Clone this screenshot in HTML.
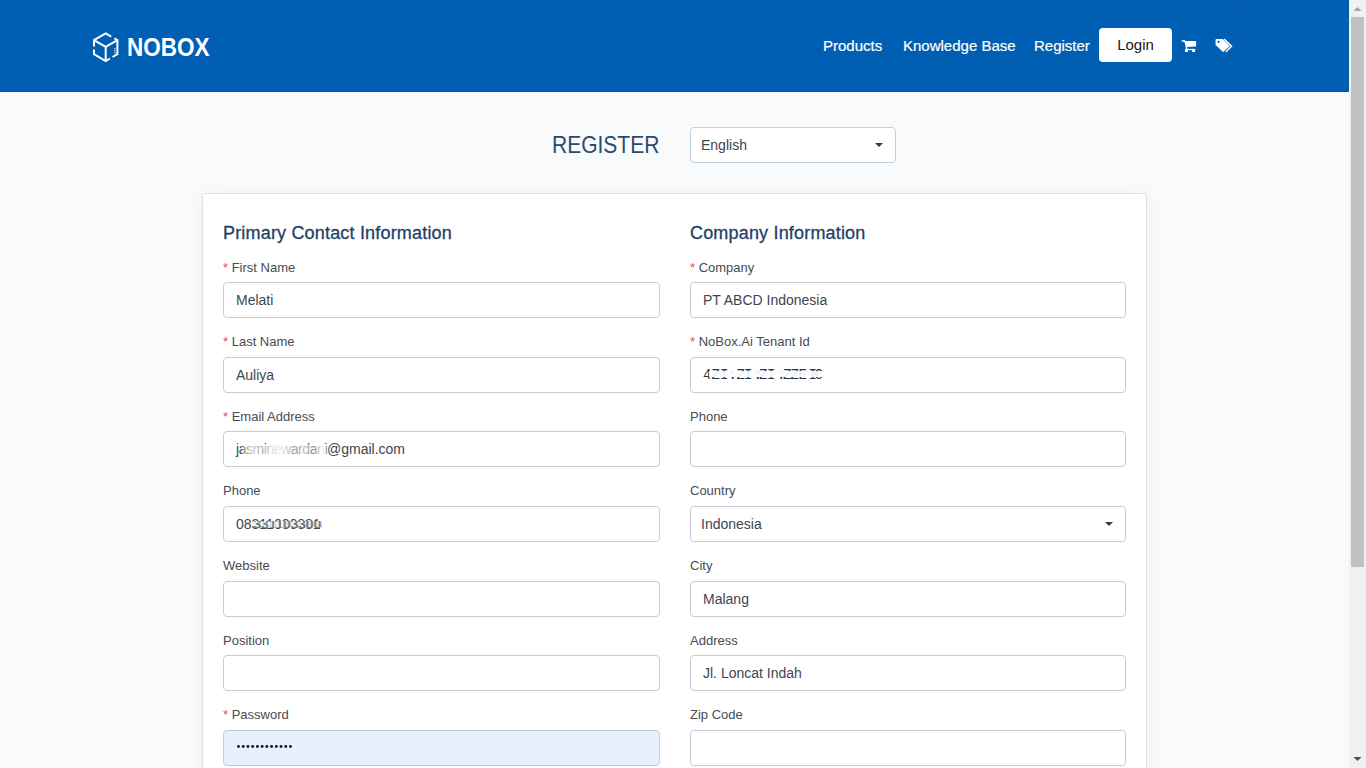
<!DOCTYPE html>
<html><head><meta charset="utf-8">
<style>
*{box-sizing:border-box;margin:0;padding:0}
html,body{width:1366px;height:768px;overflow:hidden;background:#f8fafc;font-family:"Liberation Sans",sans-serif}
.abs{position:absolute}
#nav{position:absolute;left:0;top:0;width:1349px;height:92px;background:#005eb3;border-bottom:1px solid #0454a6}
#navline{position:absolute;left:0;top:92px;width:1349px;height:1px;background:#fff}
.logo-text{position:absolute;left:127px;top:31px;font-size:25px;font-weight:bold;color:#fff;letter-spacing:0;line-height:32px;transform:scaleX(0.90);transform-origin:0 0}
.nl{position:absolute;top:37px;font-size:15px;color:#fff;line-height:17px;white-space:nowrap;-webkit-text-stroke:0.2px #fff}
#login{position:absolute;left:1099px;top:28px;width:73px;height:34px;background:#fff;border-radius:4px;font-size:15px;color:#1a1a1a;text-align:center;line-height:34px}
#sb{position:absolute;left:1349px;top:0;width:17px;height:768px;background:#f1f1f1}
#thumb{position:absolute;left:1351px;top:17px;width:13px;height:550px;background:#c1c1c1}
#title{position:absolute;left:552px;top:131px;font-size:24px;color:#2a4a6e;line-height:28px;transform:scaleX(0.875);transform-origin:0 0}
#lang{position:absolute;left:690px;top:127px;width:206px;height:36px;background:#fff;border:1px solid #c3cddb;border-radius:4px;font-size:14px;color:#3b4453;line-height:34px;padding-left:10px}
#card{position:absolute;left:202px;top:193px;width:945px;height:620px;background:#fff;border:1px solid #e0e2e5;border-radius:3px;box-shadow:0 2px 20px rgba(0,0,0,0.05)}
.h4{position:absolute;top:222px;font-size:18px;color:#1f3f66;line-height:22px;letter-spacing:0.18px;-webkit-text-stroke:0.3px #1f3f66}
.lbl{position:absolute;font-size:13px;color:#474b53;line-height:16px;white-space:nowrap}
.req{color:#f0445a}
.inp{position:absolute;height:36px;background:#fff;border:1px solid #c3cddb;border-radius:4px;font-size:14px;color:#40454e;line-height:34px;padding-left:12px;white-space:nowrap}
.inp.auto{background:#e8f0fe}
.caret{position:absolute;right:12px;top:15px;width:0;height:0;border-left:4px solid transparent;border-right:4px solid transparent;border-top:4px solid #3a3a3a}
#lang .caret{right:12px;top:15px}
.smudge{color:#6d7480;letter-spacing:-0.45px;opacity:.6}
.ov{position:absolute;background:rgba(246,248,248,0.82)}
.ph2{position:absolute;font-size:14px;line-height:34px;font-weight:bold;color:#0f1722;opacity:.55;letter-spacing:-0.2px;white-space:nowrap}
.tc{position:absolute;top:0;color:#2d3442;font-family:"Liberation Mono",monospace;font-size:14px}
.dot{position:absolute;top:14.75px;width:3.5px;height:3.5px;border-radius:50%;background:#151515}
.smudge2{color:#555e6c;opacity:.8;letter-spacing:-0.5px}
.smudge3{color:#6a7180;opacity:.7;letter-spacing:0px}
.dots{color:#111;font-size:10px;letter-spacing:-1.2px}
</style></head><body>
<div id="nav"></div>
<div id="navline"></div>
<svg class="abs" style="left:90px;top:29px" width="32" height="36" viewBox="0 0 32 36">
<g fill="none" stroke="#fff" stroke-width="2" stroke-linecap="butt" stroke-linejoin="miter">
<path d="M21.2 7.6 L15.7 4.4 L4 11.1 L4 17.6"/>
<path d="M4 20.4 L4 25.1 L15.7 32 L19.9 29.5"/>
<path d="M22.5 28 L27.4 25.1 L27.4 11.1 L24.4 9.3"/>
<path d="M4 11.1 L15.7 17.9 L27.4 11.1 M15.7 17.9 L15.7 32"/>
</g>
<g fill="#fff" opacity="0.85"><rect x="24" y="19.2" width="1.6" height="1"/><rect x="24" y="21.2" width="1.6" height="1"/><rect x="24" y="23.2" width="1.6" height="1"/></g>
</svg>
<div class="logo-text">NOBOX</div>
<div class="nl" style="left:823px">Products</div>
<div class="nl" style="left:903px">Knowledge Base</div>
<div class="nl" style="left:1034px">Register</div>
<div id="login">Login</div>
<svg class="abs" style="left:1178px;top:34px" width="22" height="22" viewBox="0 0 22 22">
<g fill="#fff">
<rect x="3.7" y="6.1" width="3.3" height="1.6"/><path d="M6.2 6.8 L7.5 6.8 L9.6 15 L8.2 15 Z"/>
<path d="M6.3 6.9 H18.1 V12.5 L8.6 13.1 Z"/>
<rect x="7.0" y="14.9" width="10.1" height="1.2"/>
<rect x="7.0" y="14.9" width="2.9" height="3.1"/>
<rect x="14.1" y="14.9" width="3.0" height="3.1"/>
</g></svg>
<svg class="abs" style="left:1214px;top:38px" width="22" height="18" viewBox="0 0 22 18">
<path fill="#fff" d="M2.3 1 H8.8 L15.4 7.6 Q15.8 8 15.4 8.4 L9.6 13.8 Q9.2 14.1 8.8 13.8 L1.6 6.9 V1.7 Q1.6 1 2.3 1 Z"/>
<circle cx="4.6" cy="3.9" r="1.05" fill="#005eb3"/>
<path fill="none" stroke="#fff" stroke-width="1.4" d="M10.1 1.1 L17.6 8.2 L11.8 14"/>
</svg>
<div class="abs" style="left:1242px;top:6px;width:1px;height:1px;background:#1d5580"></div><div class="abs" style="left:1242px;top:12px;width:1px;height:3px;background:#1d5580"></div>
<div id="sb"></div>
<div id="thumb"></div>
<svg class="abs" style="left:1349px;top:0" width="17" height="17"><path d="M4.5 11 L8.5 7 L12.5 11 Z" fill="#a3a3a3"/></svg>
<svg class="abs" style="left:1349px;top:751px" width="17" height="17"><path d="M4.5 6 L8.5 10 L12.5 6 Z" fill="#505050"/></svg>
<div id="title">REGISTER</div>
<div id="lang">English<div class="caret"></div></div>
<div id="card"></div>
<div class="h4" style="left:223px">Primary Contact Information</div>
<div class="h4" style="left:690px">Company Information</div>
<div class="lbl" style="left:223px;top:260px"><span class="req">*</span> First Name</div>
<div class="inp" style="left:223px;top:282px;width:437px">Melati</div>
<div class="lbl" style="left:223px;top:334px"><span class="req">*</span> Last Name</div>
<div class="inp" style="left:223px;top:357px;width:437px">Auliya</div>
<div class="lbl" style="left:223px;top:409px"><span class="req">*</span> Email Address</div>
<div class="inp" style="left:223px;top:431px;width:437px"><span style="letter-spacing:-0.45px">jasminewardani</span>@gmail.com<div class="ov" style="left:18px;top:12px;width:84px;height:11px;background:linear-gradient(90deg,rgba(255,255,255,.3) 0%,rgba(250,251,252,.75) 12%,rgba(255,255,255,.55) 25%,rgba(246,248,250,.9) 38%,rgba(255,255,255,.85) 50%,rgba(255,255,255,.45) 62%,rgba(250,250,250,.7) 75%,rgba(255,255,255,.35) 85%,rgba(255,255,255,.9) 95%)"></div></div>
<div class="lbl" style="left:223px;top:483px">Phone</div>
<div class="inp" style="left:223px;top:506px;width:437px">08311030881<div class="ov" style="left:30px;top:14px;width:68px;height:7px;overflow:hidden"><div class="ph2" style="left:-0.5px;top:-14px">33110330081</div></div></div>
<div class="lbl" style="left:223px;top:558px">Website</div>
<div class="inp" style="left:223px;top:581px;width:437px"></div>
<div class="lbl" style="left:223px;top:633px">Position</div>
<div class="inp" style="left:223px;top:655px;width:437px"></div>
<div class="lbl" style="left:223px;top:707px"><span class="req">*</span> Password</div>
<div class="inp auto" style="left:223px;top:730px;width:437px"><svg style="position:absolute;left:0;top:0" width="80" height="34"><circle cx="14.50" cy="15.50" r="1.45" fill="#151515"/><circle cx="19.23" cy="15.50" r="1.45" fill="#151515"/><circle cx="23.95" cy="15.50" r="1.45" fill="#151515"/><circle cx="28.68" cy="15.50" r="1.45" fill="#151515"/><circle cx="33.41" cy="15.50" r="1.45" fill="#151515"/><circle cx="38.13" cy="15.50" r="1.45" fill="#151515"/><circle cx="42.86" cy="15.50" r="1.45" fill="#151515"/><circle cx="47.59" cy="15.50" r="1.45" fill="#151515"/><circle cx="52.32" cy="15.50" r="1.45" fill="#151515"/><circle cx="57.04" cy="15.50" r="1.45" fill="#151515"/><circle cx="61.77" cy="15.50" r="1.45" fill="#151515"/><circle cx="66.50" cy="15.50" r="1.45" fill="#151515"/></svg></div>
<div class="lbl" style="left:690px;top:260px"><span class="req">*</span> Company</div>
<div class="inp" style="left:690px;top:282px;width:436px">PT ABCD Indonesia</div>
<div class="lbl" style="left:690px;top:334px"><span class="req">*</span> NoBox.Ai Tenant Id</div>
<div class="inp" style="left:690px;top:357px;width:436px"><span class="tc" style="left:12.0px">4</span><span class="tc" style="left:20.5px">Z</span><span class="tc" style="left:29.0px">I</span><span class="tc" style="left:37.5px">:</span><span class="tc" style="left:45.5px">Z</span><span class="tc" style="left:53.0px">I</span><span class="tc" style="left:62.5px">:</span><span class="tc" style="left:68.0px">Z</span><span class="tc" style="left:76.0px">I</span><span class="tc" style="left:86.0px">:</span><span class="tc" style="left:92.0px">Z</span><span class="tc" style="left:99.5px">Z</span><span class="tc" style="left:107.5px">E</span><span class="tc" style="left:117.5px">I</span><span class="tc" style="left:123.5px">C</span><div class="ov" style="left:18px;top:13px;width:116px;height:6px;background:rgba(252,252,253,0.9)"></div></div>
<div class="lbl" style="left:690px;top:409px">Phone</div>
<div class="inp" style="left:690px;top:431px;width:436px"></div>
<div class="lbl" style="left:690px;top:483px">Country</div>
<div class="inp" style="left:690px;top:506px;width:436px;padding-left:10px">Indonesia<div class="caret"></div></div>
<div class="lbl" style="left:690px;top:558px">City</div>
<div class="inp" style="left:690px;top:581px;width:436px">Malang</div>
<div class="lbl" style="left:690px;top:633px">Address</div>
<div class="inp" style="left:690px;top:655px;width:436px">Jl. Loncat Indah</div>
<div class="lbl" style="left:690px;top:707px">Zip Code</div>
<div class="inp" style="left:690px;top:730px;width:436px"></div>
</body></html>
